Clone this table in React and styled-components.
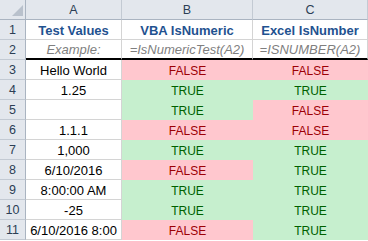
import React from "react";
import styled, { createGlobalStyle, css } from "styled-components";

const Global = createGlobalStyle`
  html, body {
    margin: 0;
    padding: 0;
    background: #ffffff;
  }
  body {
    font-family: "Liberation Sans", Arial, sans-serif;
  }
`;

const Sheet = styled.div`
  display: grid;
  grid-template-columns: 26px 96px 131px 115px;
  grid-auto-rows: 20px;
  width: 368px;
`;

const headerBase = css`
  background: #e3e7ed;
  color: #2c3e55;
  font-size: 12.5px;
  display: flex;
  align-items: center;
  justify-content: center;
  box-sizing: border-box;
`;

const Corner = styled.div`
  ${headerBase};
  position: relative;
  border-right: 1px solid #aab4c1;
  border-bottom: 1px solid #aab4c1;

  &::after {
    content: "";
    position: absolute;
    right: 2px;
    bottom: 3px;
    width: 0;
    height: 0;
    border-left: 11px solid transparent;
    border-bottom: 11px solid #b9c1cc;
  }
`;

const ColHead = styled.div`
  ${headerBase};
  border-right: 1px solid #c3cad3;
  border-bottom: 1px solid #aab4c1;
  padding-top: 1px;
`;

const RowHead = styled.div`
  ${headerBase};
  border-right: 1px solid #aab4c1;
  border-bottom: 1px solid #c3cad3;
  padding-top: 1px;
`;

const tones = {
  pink: css`
    background: #ffc7ce;
    color: #9c0006;
  `,
  green: css`
    background: #c6efce;
    color: #006100;
  `,
};

const Cell = styled.div`
  display: flex;
  align-items: center;
  justify-content: center;
  box-sizing: border-box;
  padding-top: 1px;
  white-space: nowrap;
  overflow: hidden;
  color: #000000;
  font-size: 13px;
  border-right: 1px solid #d4d4d4;
  border-bottom: 1px solid #d4d4d4;
  ${(p) => p.$thick && css`
    border-bottom: 2px solid #000000;
  `}
  ${(p) => p.$tone && css`
    ${tones[p.$tone]};
    border: none;
    font-size: 12px;
  `}
`;

const Title = styled(Cell)`
  font-weight: bold;
  color: #1f5290;
  font-size: 13px;
`;

const Example = styled(Cell)`
  font-style: italic;
  color: #7f7f7f;
  font-size: 13px;
`;

const rows = [
  ["Hello World", false, false],
  ["1.25", true, true],
  ["", true, false],
  ["1.1.1", false, false],
  ["1,000", true, true],
  ["6/10/2016", false, true],
  ["8:00:00 AM", true, true],
  ["-25", true, true],
  ["6/10/2016 8:00", false, true],
];

const Result = ({ value }) => (
  <Cell $tone={value ? "green" : "pink"}>{value ? "TRUE" : "FALSE"}</Cell>
);

export default function App() {
  return (
    <>
      <Global />
      <Sheet>
        <Corner />
        <ColHead>A</ColHead>
        <ColHead>B</ColHead>
        <ColHead>C</ColHead>

        <RowHead>1</RowHead>
        <Title>Test Values</Title>
        <Title>VBA IsNumeric</Title>
        <Title>Excel IsNumber</Title>

        <RowHead>2</RowHead>
        <Example $thick>Example:</Example>
        <Example $thick>=IsNumericTest(A2)</Example>
        <Example $thick>=ISNUMBER(A2)</Example>

        {rows.map(([text, vba, excel], i) => (
          <React.Fragment key={i}>
            <RowHead>{i + 3}</RowHead>
            <Cell>{text}</Cell>
            <Result value={vba} />
            <Result value={excel} />
          </React.Fragment>
        ))}
      </Sheet>
    </>
  );
}
